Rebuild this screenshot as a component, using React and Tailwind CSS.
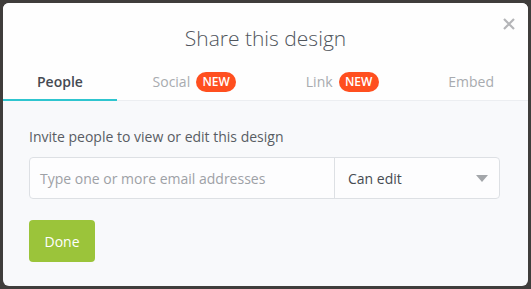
import React from 'react';

const font = { fontFamily: '"Open Sans", "Liberation Sans", sans-serif' };

const Badge = () => (
  <span className="ml-[6px] inline-flex h-[20px] w-[40px] items-center justify-center rounded-full bg-[#ff4f1f] text-[12px] font-semibold leading-none text-white">
    NEW
  </span>
);

const tabs = [
  { label: 'People', active: true },
  { label: 'Social', badge: true },
  { label: 'Link', badge: true },
  { label: 'Embed' },
];

export default function App() {
  return (
    <div className="h-[289px] w-[531px] bg-[#3f3d3b] pl-[3px] pt-[3px]" style={font}>
      <div className="relative flex h-[283px] w-[525px] flex-col overflow-hidden rounded-[6px] bg-[#f8f9fb]">
        {/* close */}
        <button className="absolute right-[13px] top-[15px] h-[12px] w-[12px]">
          <svg viewBox="0 0 12 12" className="h-[12px] w-[12px]">
            <path d="M1 1L11 11M11 1L1 11" stroke="#b4b5b8" strokeWidth="2.2" />
          </svg>
        </button>

        {/* header */}
        <div className="bg-[#fefefe] pt-[20px]">
          <h2 className="h-[30px] text-center text-[21px] font-light leading-[30px] text-[#50555c]">
            Share this design
          </h2>
          <div className="flex justify-between border-b border-[#eceef1]">
            {tabs.map((t) => (
              <div
                key={t.label}
                className={
                  t.active
                    ? '-mb-px flex h-[48px] items-start border-b-2 border-[#2ec5cf] px-[34px] pt-[19px]'
                    : 'flex h-[47px] items-start px-[34px] pt-[19px]'
                }
              >
                <div className="flex h-[20px] items-center">
                  <span
                    className={
                      t.active
                        ? 'text-[14px] font-semibold leading-[20px] text-[#454a52]'
                        : 'text-[14px] leading-[20px] text-[#a8abaf]'
                    }
                  >
                    {t.label}
                  </span>
                  {t.badge && <Badge />}
                </div>
              </div>
            ))}
          </div>
        </div>

        {/* body */}
        <div className="px-[26px] pt-[26px]">
          <p className="text-[14px] leading-[20px] text-[#585d64]">
            Invite people to view or edit this design
          </p>
          <div className="mt-[10px] flex h-[42px] w-[471px] rounded-[4px] border border-[#dde0e4] bg-[#fdfdfe]">
            <div className="flex w-[305px] items-center border-r border-[#dde0e4] pl-[10px]">
              <span className="text-[14px] text-[#9da1a6]">Type one or more email addresses</span>
            </div>
            <div className="flex flex-1 items-center justify-between pl-[13px] pr-[11px]">
              <span className="text-[14px] text-[#464b52]">Can edit</span>
              <svg viewBox="0 0 12 7" className="h-[7px] w-[12px]">
                <path d="M0 0H12L6 7Z" fill="#a3a6aa" />
              </svg>
            </div>
          </div>
          <button className="mt-[21px] flex h-[42px] w-[66px] items-center justify-center rounded-[4px] bg-[#9bc43a] text-[14px] text-white">
            Done
          </button>
        </div>
      </div>
    </div>
  );
}
